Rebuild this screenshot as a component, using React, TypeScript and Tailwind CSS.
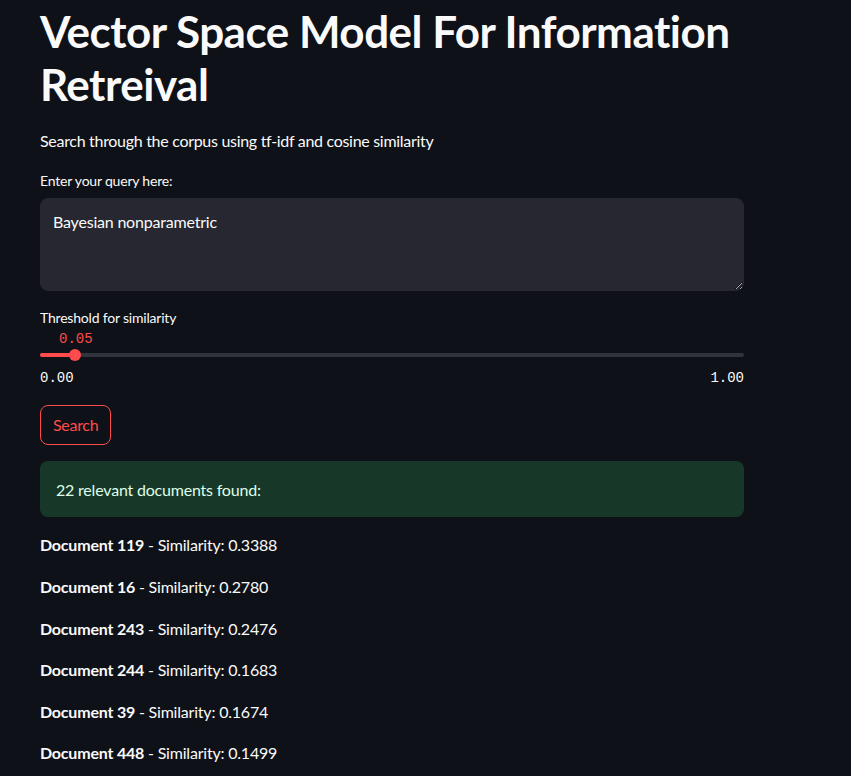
import React from "react";

const results = [
  { id: 119, score: "0.3388" },
  { id: 16, score: "0.2780" },
  { id: 243, score: "0.2476" },
  { id: 244, score: "0.1683" },
  { id: 39, score: "0.1674" },
  { id: 448, score: "0.1499" },
];

const sans = "font-['Lato','Liberation_Sans',sans-serif]";
const mono = "font-['Liberation_Mono','DejaVu_Sans_Mono',monospace]";

export default function App() {
  return (
    <div className={`min-h-[776px] w-full overflow-hidden bg-[#0e1117] text-[#fafafa] ${sans}`}>
      <div className="ml-[40px] w-[704px]">
        <h1 className="pt-[5px] text-[44px] font-bold leading-[52.8px] tracking-[-0.5px]">
          Vector Space Model For Information Retreival
        </h1>

        <p className="mt-[17px] text-[16px] leading-[25.6px] tracking-[-0.3px]">
          Search through the corpus using tf-idf and cosine similarity
        </p>

        <label className="mt-[17px] block text-[14px] leading-[22.4px] tracking-[-0.2px]">Enter your query here:</label>
        <textarea
          readOnly
          defaultValue="Bayesian nonparametric"
          className="mt-[5px] block h-[93px] w-full rounded-lg border border-[#262730] bg-[#262730] px-[12px] py-[10px] text-[16px] leading-[25.6px] tracking-[-0.2px] text-[#fafafa] outline-none [color-scheme:dark]"
        />

        <label className="mt-[16px] block text-[14px] leading-[22.4px] tracking-[-0.2px]">Threshold for similarity</label>
        <div className="relative h-[36px] w-full">
          <span className={`absolute left-[19px] top-[-1px] text-[14px] leading-[22.4px] text-[#ff4b4b] ${mono}`}>
            0.05
          </span>
          <div className="absolute left-0 right-0 top-[24px] h-[4px] rounded-full bg-[#31333f]" />
          <div className="absolute left-0 top-[24px] h-[4px] w-[35px] rounded-l-full bg-[#ff4b4b]" />
          <div className="absolute left-[29px] top-[20px] h-[12px] w-[12px] rounded-full bg-[#ff4b4b]" />
        </div>
        <div className={`mt-[2px] flex justify-between text-[14px] leading-[22.4px] ${mono}`}>
          <span>0.00</span>
          <span>1.00</span>
        </div>

        <button className="mt-[16px] h-[40px] rounded-lg border border-[#ff4b4b] px-[12px] text-[16px] tracking-[-0.3px] text-[#ff4b4b]">
          Search
        </button>

        <div className="mt-[16px] flex h-[56px] items-center rounded-lg bg-[#173828] px-[16px] text-[16px] leading-[25.6px] tracking-[-0.2px] text-[#dffde9]">
          22 relevant documents found:
        </div>

        <div className="mt-[15px] flex flex-col gap-[16px]">
          {results.map((r) => (
            <p key={r.id} className="text-[16px] leading-[25.6px] tracking-[-0.2px]">
              <strong className="font-bold">Document {r.id}</strong> - Similarity: {r.score}
            </p>
          ))}
        </div>
      </div>
    </div>
  );
}
